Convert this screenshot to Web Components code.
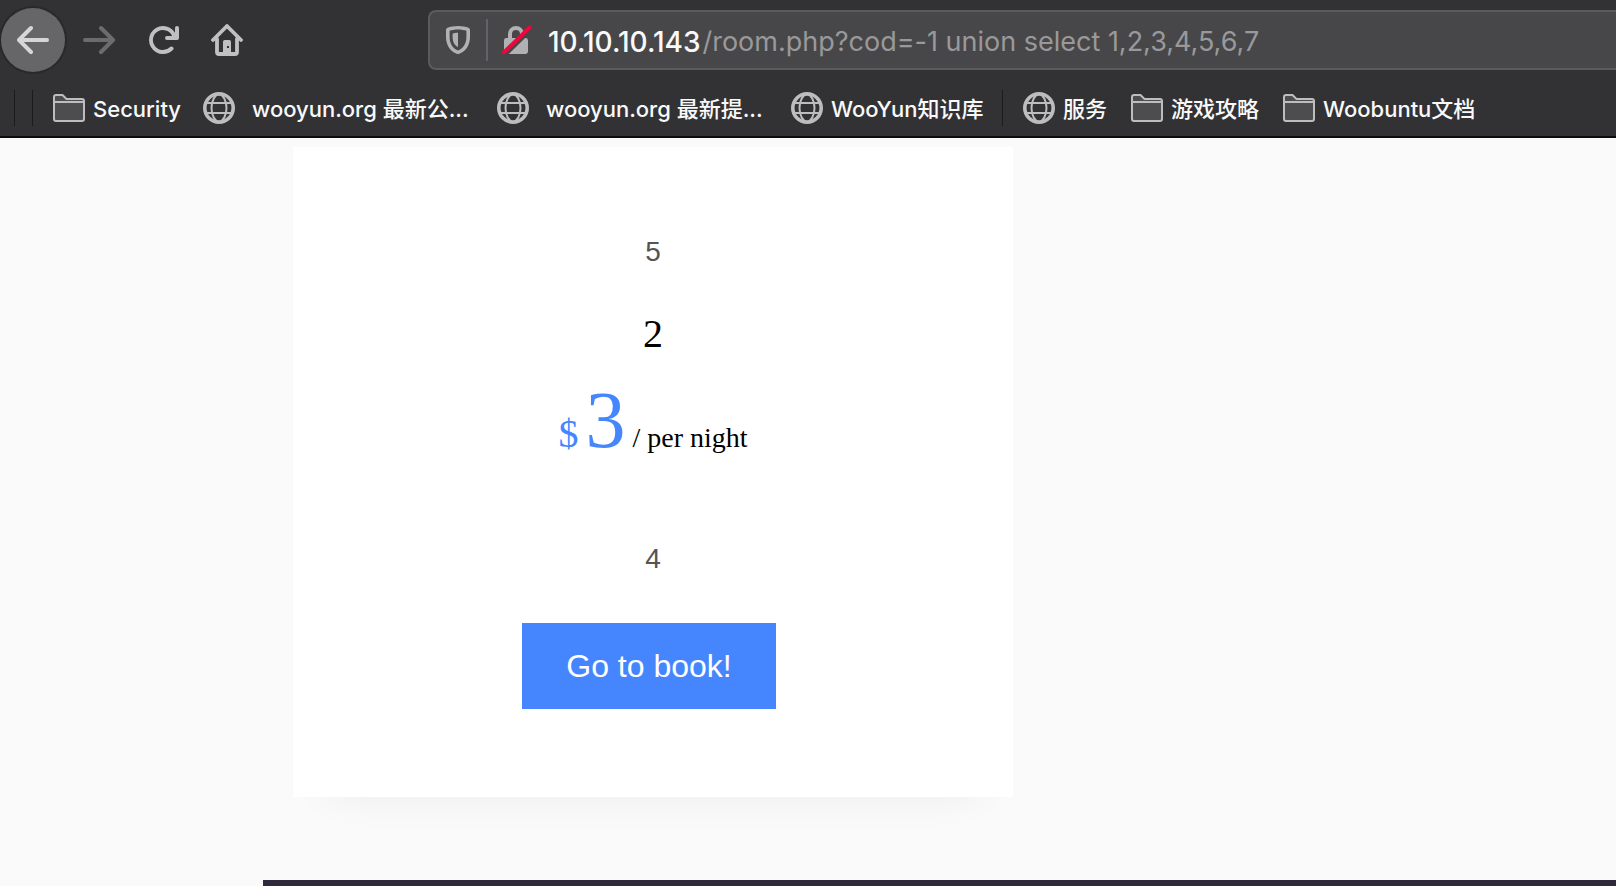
<!DOCTYPE html>
<html lang="en">
<head>
<meta charset="utf-8">
<meta name="viewport" content="width=device-width, initial-scale=1">
<title>Room</title>
<style>
  body { margin: 0; background: #fafafa; }
</style>
</head>
<body>
<browser-window></browser-window>

<template id="tpl-window">
  <style>
    :host { display: flex; flex-direction: column; height: 100vh; overflow: hidden; }
    room-page { flex: 1; min-height: 0; }
  </style>
  <nav-toolbar></nav-toolbar>
  <bookmarks-bar>
    <bar-separator></bar-separator>
    <bar-separator class="second"></bar-separator>
    <bookmark-item icon="folder" size="s">Security</bookmark-item>
    <bookmark-item icon="globe" size="l">wooyun.org 最新公...</bookmark-item>
    <bookmark-item icon="globe" size="l">wooyun.org 最新提...</bookmark-item>
    <bookmark-item icon="globe" size="m">WooYun知识库</bookmark-item>
    <bar-separator></bar-separator>
    <bookmark-item icon="globe">服务</bookmark-item>
    <bookmark-item icon="folder">游戏攻略</bookmark-item>
    <bookmark-item icon="folder">Woobuntu文档</bookmark-item>
  </bookmarks-bar>
  <room-page></room-page>
</template>

<template id="tpl-toolbar">
  <style>
    :host { display: flex; align-items: center; height: 80px; background: #323234; }
    nav { display: flex; padding-left: 1px; width: 428px; flex: none; box-sizing: border-box; }
    nav tool-button:first-child { margin-right: 2px; }
    address-bar { flex: 1; min-width: 0; }
  </style>
  <nav>
    <tool-button label="Back" round><svg viewBox="0 0 16 16"><path d="M15 7H3.414l4.293-4.293a1 1 0 0 0-1.414-1.414l-6 6a1 1 0 0 0 0 1.414l6 6a1 1 0 0 0 1.414-1.414L3.414 9H15a1 1 0 0 0 0-2z"/></svg></tool-button>
    <tool-button label="Forward" dim><svg viewBox="0 0 16 16"><path d="M1 7h11.586L8.293 2.707a1 1 0 0 1 1.414-1.414l6 6a1 1 0 0 1 0 1.414l-6 6a1 1 0 0 1-1.414-1.414L12.586 9H1a1 1 0 0 1 0-2z"/></svg></tool-button>
    <tool-button label="Reload"><svg viewBox="0 0 16 16"><path d="M15 1a1 1 0 0 0-1 1v2.418A6.995 6.995 0 1 0 8 15a6.954 6.954 0 0 0 4.95-2.05 1 1 0 0 0-1.414-1.414A5.019 5.019 0 1 1 12.549 6H10a1 1 0 0 0 0 2h5a1 1 0 0 0 1-1V2a1 1 0 0 0-1-1z"/></svg></tool-button>
    <tool-button label="Home"><svg viewBox="0 0 16 16"><path d="M1 8l7-7 7 7M3 7.500V14a1 1 0 0 0 1 1h8a1 1 0 0 0 1-1V7.500" fill="none" stroke="currentColor" stroke-width="1.900" stroke-linecap="round" stroke-linejoin="round"/><path fill-rule="evenodd" d="M6.900 8h2.200a.9.9 0 0 1 .9.9V15H6V8.900a.9.9 0 0 1 .9-.9zM8 11v1h1v-1z"/></svg></tool-button>
  </nav>
  <address-bar></address-bar>
</template>

<template id="tpl-tool">
  <style>
    :host { display: block; color: #c0c0c2; }
    :host([round]) { color: #d6d6d6; }
    :host([dim]) { color: #6c6c6e; }
    button { display: grid; place-items: center; width: 64px; height: 64px; padding: 0; border: 0; border-radius: 50%; background: none; color: inherit; }
    :host([round]) button { background: #666668; box-shadow: 0 0 0 2px #29292b; }
    ::slotted(svg) { display: block; width: 32px; height: 32px; fill: currentColor; }
  </style>
  <button type="button"><slot></slot></button>
</template>

<template id="tpl-address">
  <style>
    :host { display: flex; align-items: center; box-sizing: border-box; height: 60px; background: #474749; border: 2px solid #5b5b5d; border-right: 0; border-radius: 8px 0 0 8px; padding-left: 12px; font: 27px/40px Inter, sans-serif; }
    svg { width: 32px; height: 32px; flex: none; fill: #b1b1b3; }
    i { width: 2px; height: 42px; margin: 0 12px; background: #62626a; flex: none; }
    label, input { padding: 4px 0 0; height: 40px; }
    label { color: #f9f9fa; margin: 0 2px 0 16px; flex: none; font-size: 28px; font-weight: 500; }
    input { flex: 1; min-width: 0; border: 0; outline: 0; background: none; font: inherit; color: #99999b; }
  </style>
  <svg viewBox="0 0 16 16"><path fill-rule="evenodd" d="M8 1c2 0 4 .4 5.200.9.500.2.800.6.800 1.100v3.500c0 4.500-2.500 7.300-5.300 8.400a2 2 0 0 1-1.400 0C4.500 13.800 2 11 2 6.500V3c0-.5.300-.9.800-1.100C4 1.400 6 1 8 1zM8 2.700c-1.600 0-3.200.3-4.200.7v3.100c0 3.700 2 5.900 4.200 6.800 2.200-.9 4.200-3.100 4.200-6.800V3.400c-1-.4-2.600-.7-4.200-.7z"/><path d="M8 4.400v7.200C6.300 10.700 5.300 9 5.300 6.600V4.900C6 4.600 7 4.400 8 4.400z"/></svg>
  <i></i>
  <svg viewBox="0 0 16 16"><path fill-rule="evenodd" d="M4 7V5a4 4 0 0 1 8 0v2h.8A1.200 1.200 0 0 1 14 8.200v5.600a1.200 1.200 0 0 1-1.200 1.200H3.200A1.200 1.200 0 0 1 2 13.800V8.200A1.200 1.200 0 0 1 3.200 7zM6 7h4V5a2 2 0 0 0-4 0z"/><path d="M2.300 15.900L15.500 3" stroke="#474749" stroke-width="1.600"/><path d="M1.900 14.200L14.700 1.800" stroke="#f0063c" stroke-width="1.900" stroke-linecap="round"/></svg>
  <label for="url">10.10.10.143</label><input id="url" type="text" spellcheck="false" value="/room.php?cod=-1 union select 1,2,3,4,5,6,7">
</template>

<template id="tpl-bookmarks">
  <style>
    :host { display: flex; align-items: center; box-sizing: border-box; height: 58px; padding: 0 0 0 14px; gap: 24px; background: #323234; border-bottom: 2px solid #0c0c0d; overflow: hidden; }
    ::slotted(bar-separator) { margin: 0 -4px 0 -3px; }
    ::slotted(bar-separator:first-child) { margin: 0 -7px 0 0; }
    ::slotted(.second) { margin: 0 -4px 0 0; }
  </style>
  <slot></slot>
</template>

<template id="tpl-separator">
  <style>:host { display: block; width: 1px; height: 36px; background: #1b1b1d; flex: none; }</style>
</template>

<template id="tpl-bookmark">
  <style>
    :host { display: block; flex: none; }
    a { display: flex; align-items: center; gap: 8px; color: #f9f9fa; text-decoration: none; white-space: nowrap; font: 500 22px/32px Inter, "Noto Sans CJK SC", sans-serif; }
    span { padding-top: 2px; }
    :host([size="s"]) a { width: 126px; }
    :host([size="m"]) a { width: 190px; }
    :host([size="l"]) a { width: 270px; gap: 17px; }
    svg { width: 32px; height: 32px; flex: none; display: none; fill: none; stroke: #bdbdbf; }
    :host([icon="folder"]) .folder, :host([icon="globe"]) .globe { display: block; }
  </style>
  <a href="#">
    <svg class="folder" viewBox="0 0 32 32" stroke-width="2"><path fill="#4d4d4f" d="M1 10V5a2 2 0 0 1 2-2h6.500l4 4H29a2 2 0 0 1 2 2v18a2 2 0 0 1-2 2H3a2 2 0 0 1-2-2V10h30"/></svg>
    <svg class="globe" viewBox="0 0 32 32" stroke-width="2"><circle cx="16" cy="16" r="14.200" stroke-width="3.600"/><ellipse cx="16" cy="16" rx="7.500" ry="13.500"/><path d="M4 11h24M4 21h24"/></svg>
    <span><slot></slot></span>
  </a>
</template>

<template id="tpl-page">
  <style>
    :host { display: flex; flex-direction: column; background: #fafafa; }
    main { flex: 1; padding: 9px 0 0 293px; }
    footer { height: 6px; margin-left: 263px; background: #30293b; }
  </style>
  <main><room-card></room-card></main>
  <footer></footer>
</template>

<template id="tpl-card">
  <style>
    :host { display: flex; flex-direction: column; align-items: center; box-sizing: border-box; max-width: 720px; padding: 85px 44px 88px; background: #fff; box-shadow: 0 30px 40px -36px rgba(0,0,0,.08); font: 28px/40px "Liberation Serif", serif; color: #000; }
    p, h2 { margin: 0; font-weight: 400; }
    .note { font-family: "Liberation Sans", sans-serif; color: #555; }
    h2 { font-size: 40px; line-height: 48px; margin-top: 38px; }
    .price { line-height: 96px; margin-top: 14px; }
    .price span { color: #4586ff; font-size: 40px; }
    .price b { color: #4586ff; font-size: 80px; font-weight: 400; }
    .price + .note { margin-top: 53px; }
    button { margin: 44px 8px 0 0; height: 86px; padding: 0 44px; border: 0; background: #4586ff; color: #fff; font: 32px/40px "Liberation Sans", sans-serif; }
  </style>
  <p class="note">5</p>
  <h2>2</h2>
  <p class="price"><span>$</span> <b>3</b> / per night</p>
  <p class="note">4</p>
  <button type="button">Go to book!</button>
</template>

<script>
  const define = (name, template, setup) => customElements.define(name, class extends HTMLElement {
    constructor() {
      super();
      this.attachShadow({ mode: "open" }).append(document.getElementById(template).content.cloneNode(true));
    }
    connectedCallback() { if (setup) setup(this); }
  });
  define("bar-separator", "tpl-separator");
  define("bookmark-item", "tpl-bookmark");
  define("bookmarks-bar", "tpl-bookmarks");
  define("tool-button", "tpl-tool", el => el.shadowRoot.querySelector("button").setAttribute("aria-label", el.getAttribute("label")));
  define("address-bar", "tpl-address");
  define("nav-toolbar", "tpl-toolbar");
  define("room-card", "tpl-card");
  define("room-page", "tpl-page");
  define("browser-window", "tpl-window");
</script>
</body>
</html>
